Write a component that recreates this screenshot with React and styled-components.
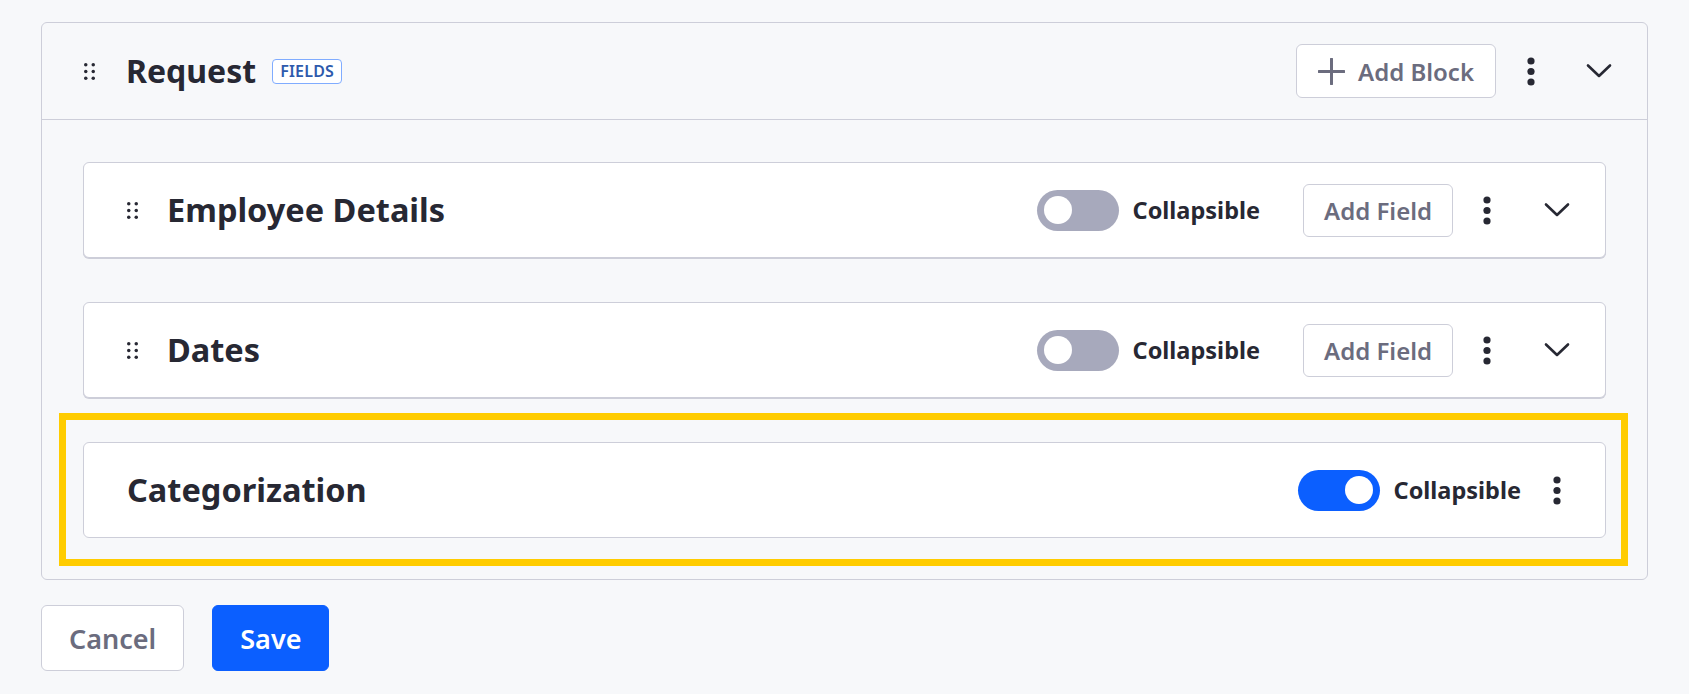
import React from 'react';
import styled, { createGlobalStyle } from 'styled-components';

const GlobalStyle = createGlobalStyle`
  html, body {
    margin: 0;
    padding: 0;
    background: #f7f8fa;
    font-family: 'Noto Sans', 'Open Sans', sans-serif;
    color: #272833;
  }
`;

const Page = styled.div`
  padding: 22px 41px;
`;

const Panel = styled.section`
  border: 1px solid #cdced9;
  border-radius: 6px;
  background: #f7f8fa;
`;

const PanelHeader = styled.header`
  display: flex;
  align-items: center;
  height: 96px;
  padding: 0 24px 0 42px;
  border-bottom: 1px solid #cdced9;
`;

const PanelBody = styled.div`
  display: flex;
  flex-direction: column;
  gap: 44px;
  padding: 42px 41px 41px 41px;
`;

const TitleGroup = styled.div`
  display: flex;
  align-items: center;
  gap: ${({ $gap }) => $gap || 30}px;
  flex: 1;
  min-width: 0;
`;

const Title = styled.h2`
  margin: 0;
  font-size: ${({ $size }) => $size || 32}px;
  font-weight: 700;
  line-height: 1;
  color: #272833;
  display: flex;
  align-items: center;
  gap: 16px;
`;

const Badge = styled.span`
  display: inline-flex;
  align-items: center;
  height: 23px;
  padding: 0 7px;
  border: 1px solid #80acff;
  border-radius: 4px;
  background: #fff;
  color: #2e5aac;
  font-size: 16px;
  font-weight: 600;
  letter-spacing: 0.2px;
`;

const Actions = styled.div`
  display: flex;
  align-items: center;
`;

const OutlineButton = styled.button`
  display: inline-flex;
  align-items: center;
  gap: 13px;
  height: ${({ $h }) => $h || 54}px;
  margin-left: ${({ $ml }) => $ml || 0}px;
  padding: 0 ${({ $px }) => $px || 21}px;
  border: 1px solid #cdced9;
  border-radius: 6px;
  background: #fff;
  color: #6b6c7e;
  font-family: inherit;
  font-size: 24px;
  font-weight: 600;
  cursor: pointer;
`;

const IconButton = styled.button`
  display: inline-flex;
  align-items: center;
  justify-content: center;
  width: 48px;
  height: 48px;
  margin-left: ${({ $ml }) => $ml || 0}px;
  padding: 0;
  border: none;
  background: transparent;
  color: #272833;
  cursor: pointer;
`;

const Card = styled.div`
  display: flex;
  align-items: center;
  height: 96px;
  box-sizing: border-box;
  padding: 0 24px 0 43px;
  border: 1px solid #cdced9;
  border-radius: 6px;
  background: #fff;
  box-shadow: ${({ $raised }) => ($raised ? '0 1px 0 #cdced9' : 'none')};
`;

const Highlight = styled.div`
  margin: -29px -22px -28px -24px;
  padding: 22px 15px 21px 17px;
  border: 7px solid #ffcc00;
`;

const ToggleWrap = styled.label`
  display: flex;
  align-items: center;
  gap: 14px;
  font-size: 23.5px;
  font-weight: 700;
  color: #272833;
  cursor: pointer;
`;

const Track = styled.span`
  display: flex;
  align-items: center;
  justify-content: ${({ $on }) => ($on ? 'flex-end' : 'flex-start')};
  width: 82px;
  height: 41px;
  box-sizing: border-box;
  padding: 0 7px;
  border-radius: 21px;
  background: ${({ $on }) => ($on ? '#0b5fff' : '#a7a9bc')};
`;

const Knob = styled.span`
  width: 28px;
  height: 28px;
  border-radius: 50%;
  background: #fff;
`;

const Footer = styled.div`
  display: flex;
  gap: 28px;
  margin-top: 25px;
`;

const FooterButton = styled.button`
  height: 66px;
  padding: 0 27px;
  border-radius: 6px;
  border: 1px solid ${({ $primary }) => ($primary ? '#0b5fff' : '#cdced9')};
  background: ${({ $primary }) => ($primary ? '#0b5fff' : '#fff')};
  color: ${({ $primary }) => ($primary ? '#fff' : '#6b6c7e')};
  font-family: inherit;
  font-size: 27px;
  font-weight: 600;
  cursor: pointer;
`;

const DragHandle = () => (
  <svg width="11" height="17" viewBox="0 0 11 17" fill="#272833">
    {[1.75, 9.25].map(x =>
      [1.75, 8.5, 15.25].map(y => <circle key={`${x}-${y}`} cx={x} cy={y} r="1.75" />)
    )}
  </svg>
);

const Kebab = () => (
  <svg width="8" height="29" viewBox="0 0 8 29" fill="#272833">
    <circle cx="4" cy="4" r="3.6" />
    <circle cx="4" cy="14.5" r="3.6" />
    <circle cx="4" cy="25" r="3.6" />
  </svg>
);

const Chevron = () => (
  <svg width="26" height="16" viewBox="0 0 26 16" fill="none">
    <path d="M2 2.5 L13 13 L24 2.5" stroke="#272833" strokeWidth="2.6" strokeLinecap="round" strokeLinejoin="round" />
  </svg>
);

const Plus = () => (
  <svg width="27" height="27" viewBox="0 0 27 27" fill="none">
    <path d="M13.5 1v25M1 13.5h25" stroke="#6b6c7e" strokeWidth="3" strokeLinecap="round" />
  </svg>
);

const Toggle = ({ on }) => (
  <ToggleWrap>
    <Track $on={on}>
      <Knob />
    </Track>
    Collapsible
  </ToggleWrap>
);

const BlockCard = ({ title, draggable, raised }) => (
  <Card $raised={raised}>
    <TitleGroup $gap={29}>
      {draggable && <DragHandle />}
      <Title $size={32.5}>{title}</Title>
    </TitleGroup>
    <Actions>
      <Toggle on={!draggable} />
      {draggable ? (
        <>
          <OutlineButton $h={53} $px={20} $ml={43}>
            Add Field
          </OutlineButton>
          <IconButton $ml={10}>
            <Kebab />
          </IconButton>
          <IconButton $ml={22}>
            <Chevron />
          </IconButton>
        </>
      ) : (
        <IconButton $ml={12}>
          <Kebab />
        </IconButton>
      )}
    </Actions>
  </Card>
);

const App = () => (
  <>
    <GlobalStyle />
    <Page>
      <Panel>
        <PanelHeader>
          <TitleGroup $gap={31}>
            <DragHandle />
            <Title>
              Request <Badge>FIELDS</Badge>
            </Title>
          </TitleGroup>
          <Actions>
            <OutlineButton>
              <Plus />
              Add Block
            </OutlineButton>
            <IconButton $ml={11}>
              <Kebab />
            </IconButton>
            <IconButton $ml={20}>
              <Chevron />
            </IconButton>
          </Actions>
        </PanelHeader>
        <PanelBody>
          <BlockCard title="Employee Details" draggable raised />
          <BlockCard title="Dates" draggable raised />
          <Highlight>
            <BlockCard title="Categorization" />
          </Highlight>
        </PanelBody>
      </Panel>
      <Footer>
        <FooterButton>Cancel</FooterButton>
        <FooterButton $primary>Save</FooterButton>
      </Footer>
    </Page>
  </>
);

export default App;
